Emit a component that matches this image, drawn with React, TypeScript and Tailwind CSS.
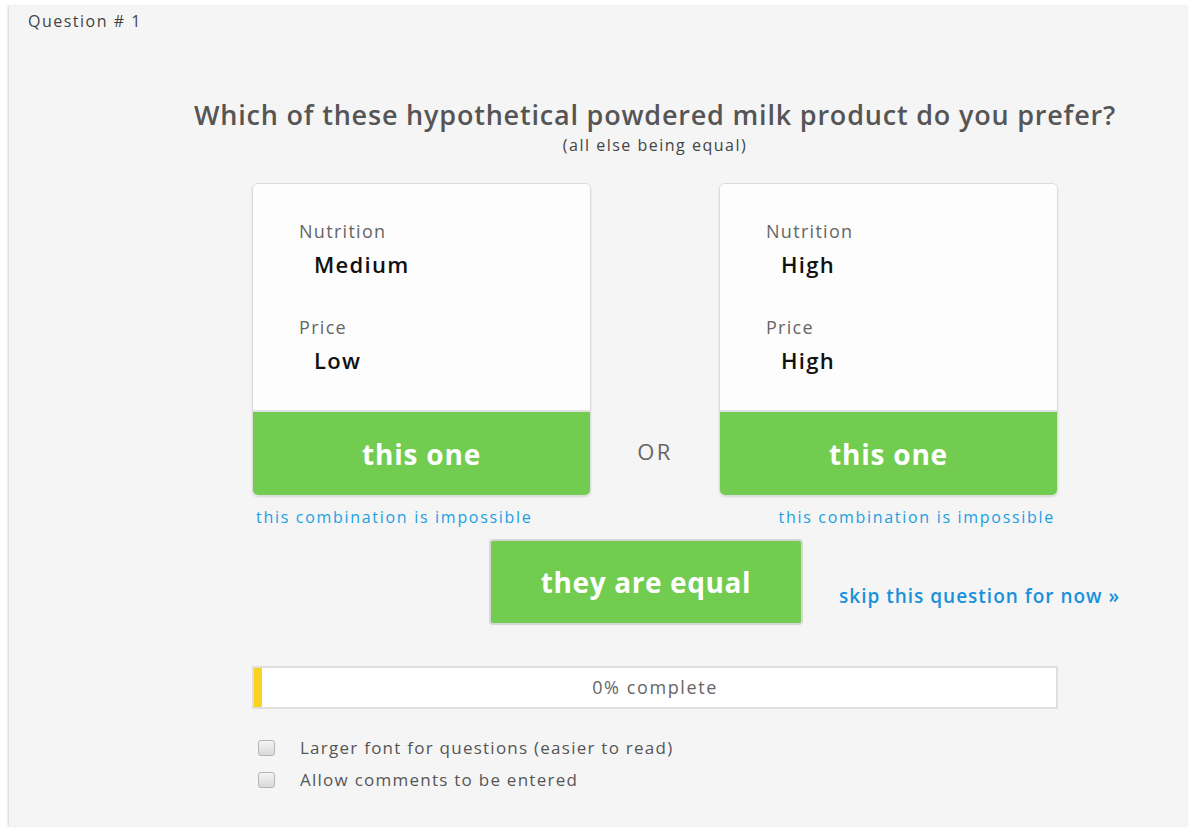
import React from "react";

type Attr = { label: string; value: string };

function OptionCard({ attrs, align }: { attrs: Attr[]; align: "left" | "right" }) {
  return (
    <div className="flex w-[339px] flex-col">
      <div className="overflow-hidden rounded-[6px] border border-[#dcdcdc] shadow-[0_1px_2px_rgba(0,0,0,0.12)]">
        <div className="h-[226px] bg-[#fdfdfd] pl-[46px] pt-[36px]">
          {attrs.map((a, i) => (
            <div key={a.label} className={i > 0 ? "mt-[40px]" : ""}>
              <div className="text-[18px] leading-[22px] tracking-[1.3px] text-[#666]">{a.label}</div>
              <div className="mt-[10px] pl-[15px] text-[22px] font-semibold leading-[24px] tracking-[1.3px] text-[#111]">{a.value}</div>
            </div>
          ))}
        </div>
        <button className="flex h-[85px] w-full items-center justify-center border-t-2 border-[#e2e2e2] bg-[#72cc50] text-[28px] font-bold tracking-[0.8px] text-white">
          this one
        </button>
      </div>
      <div className={"mt-[11px] text-[16px] leading-[20px] tracking-[1.7px] text-[#1ba0e2] " + (align === "left" ? "pl-[4px]" : "pr-[3px] text-right")}>
        this combination is impossible
      </div>
    </div>
  );
}

export default function App() {
  return (
    <div className="h-[834px] w-[1200px] bg-white font-['Open_Sans',sans-serif]">
      <div className="ml-[9px] mt-[6px] h-[820px] w-[1179px] bg-[#f5f5f5] shadow-[-1px_0_2px_rgba(0,0,0,0.18)]">
        <div className="pl-[19px] pt-[5px] text-[16px] leading-[20px] tracking-[1.5px] text-[#444]">Question # 1</div>

        <div className="ml-[243px] w-[806px]">
          <div className="mt-[67px] flex justify-center whitespace-nowrap text-[27px] font-semibold leading-[34px] tracking-[0.8px] text-[#555]">
            Which of these hypothetical powdered milk product do you prefer?
          </div>
          <div className="mt-[3px] text-center text-[16px] leading-[20px] tracking-[1.5px] text-[#444]">(all else being equal)</div>

          <div className="mt-[28px] flex items-start justify-between">
            <OptionCard
              align="left"
              attrs={[
                { label: "Nutrition", value: "Medium" },
                { label: "Price", value: "Low" },
              ]}
            />
            <div className="mt-[252px] text-[22px] tracking-[2.5px] text-[#666]">OR</div>
            <OptionCard
              align="right"
              attrs={[
                { label: "Nutrition", value: "High" },
                { label: "Price", value: "High" },
              ]}
            />
          </div>

          <div className="relative mt-[12px] flex">
            <button className="ml-[237px] h-[86px] w-[314px] rounded-[4px] border-2 border-[#d6d6d6] bg-[#72cc50] text-[28px] font-bold tracking-[0.6px] text-white">
              they are equal
            </button>
            <a className="absolute left-[587px] top-[43px] whitespace-nowrap text-[19px] font-semibold tracking-[1px] text-[#1791dc]">
              skip this question for now »
            </a>
          </div>

          <div className="mt-[41px] flex h-[43px] items-center border-2 border-[#dfdfdf] bg-white">
            <div className="h-full w-[8px] bg-[#fcd21e]" />
            <div className="flex-1 pr-[8px] text-center text-[18px] tracking-[1.6px] text-[#666]">0% complete</div>
          </div>

          <div className="mt-[28px] flex flex-col gap-[11px] pl-[6px]">
            {["Larger font for questions (easier to read)", "Allow comments to be entered"].map((t) => (
              <label key={t} className="flex items-center text-[17px] leading-[21px] tracking-[1.25px] text-[#555]">
                <span className="h-[16px] w-[17px] rounded-[3px] border border-[#b5b5b5] bg-gradient-to-b from-[#f4f4f4] to-[#d9d9d9]" />
                <span className="ml-[25px]">{t}</span>
              </label>
            ))}
          </div>
        </div>
      </div>
    </div>
  );
}
